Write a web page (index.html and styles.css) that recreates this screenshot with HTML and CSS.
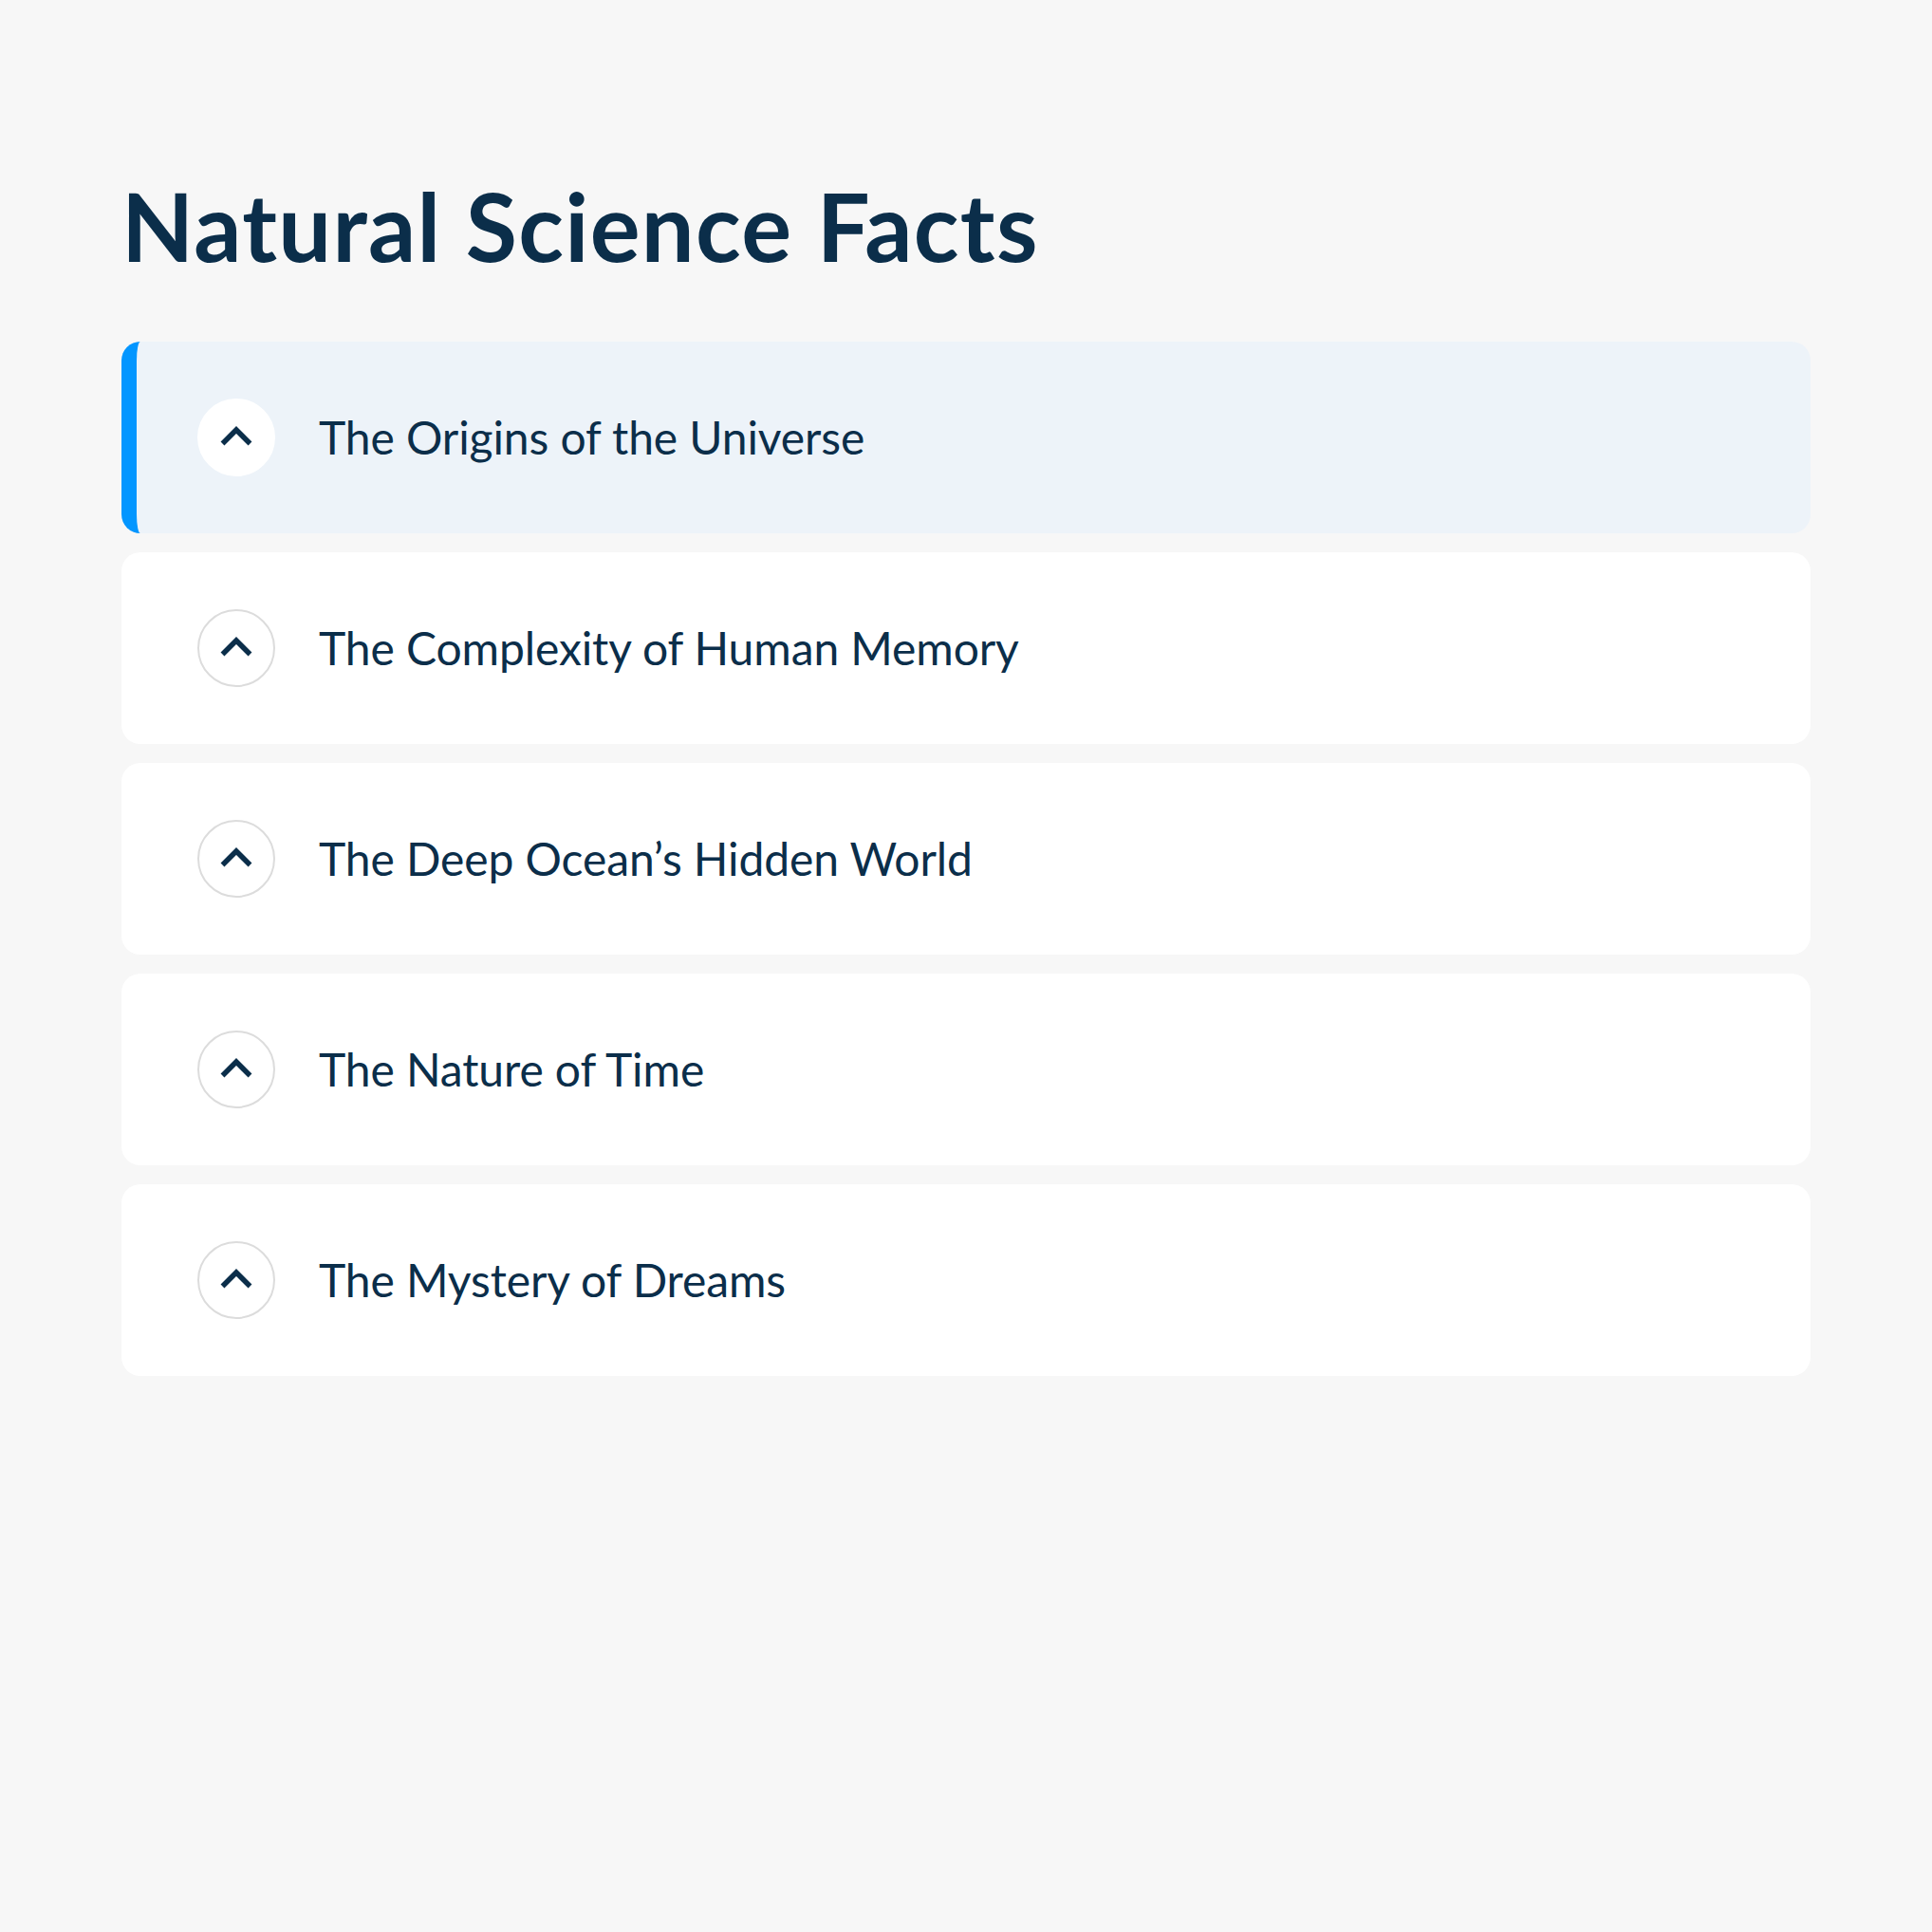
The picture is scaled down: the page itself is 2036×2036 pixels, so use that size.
FILE: index.html
```html
<!DOCTYPE html>
<html>
<head>
  <title>Natural Science Facts</title>
  <link rel="stylesheet" href="styles.css">
</head>
<body>
  <div class="container">
    <h1>Natural Science Facts</h1>
    <div class="accordion">
      <div class="item active">
        <span class="toggle">
          <svg width="34" height="21" viewBox="0 0 34 21"><path d="M2.5 18.5 L17 4 L31.5 18.5" /></svg>
        </span>
        <span class="item-title">The Origins of the Universe</span>
      </div>
      <div class="item">
        <span class="toggle">
          <svg width="34" height="21" viewBox="0 0 34 21"><path d="M2.5 18.5 L17 4 L31.5 18.5" /></svg>
        </span>
        <span class="item-title">The Complexity of Human Memory</span>
      </div>
      <div class="item">
        <span class="toggle">
          <svg width="34" height="21" viewBox="0 0 34 21"><path d="M2.5 18.5 L17 4 L31.5 18.5" /></svg>
        </span>
        <span class="item-title">The Deep Ocean’s Hidden World</span>
      </div>
      <div class="item">
        <span class="toggle">
          <svg width="34" height="21" viewBox="0 0 34 21"><path d="M2.5 18.5 L17 4 L31.5 18.5" /></svg>
        </span>
        <span class="item-title">The Nature of Time</span>
      </div>
      <div class="item">
        <span class="toggle">
          <svg width="34" height="21" viewBox="0 0 34 21"><path d="M2.5 18.5 L17 4 L31.5 18.5" /></svg>
        </span>
        <span class="item-title">The Mystery of Dreams</span>
      </div>
    </div>
  </div>
</body>
</html>
```

FILE: styles.css
```css
body {
  margin: 0;
  font-family: Lato, "Noto Sans", sans-serif;
  background-color: #f7f7f7;
  color: #0b2e4a;
}

.container {
  padding: 179px 128px 100px;
}

h1 {
  margin: 0 0 62px;
  font-size: 99px;
  line-height: 1.2;
  font-weight: 700;
  letter-spacing: 1.3px;
  color: #0b2e4a;
}

.accordion {
  display: flex;
  flex-direction: column;
  gap: 20px;
}

.item {
  display: flex;
  align-items: center;
  gap: 46px;
  padding: 60px 64px;
  background-color: #fff;
  border-left: 16px solid transparent;
  border-radius: 20px;
}

.item.active {
  background-color: #edf3f9;
  border-left-color: #0396ff;
}

.toggle {
  display: flex;
  align-items: center;
  justify-content: center;
  width: 82px;
  height: 82px;
  box-sizing: border-box;
  border: 2px solid #dcdcdc;
  border-radius: 50%;
  background-color: #fff;
}

.item.active .toggle {
  border-color: #fff;
}

.toggle svg {
  margin-top: -3px;
}

.toggle path {
  fill: none;
  stroke: #0b2e4a;
  stroke-width: 5.5;
}

.item-title {
  font-size: 48px;
  line-height: 1.2;
  letter-spacing: -0.1px;
}
```
